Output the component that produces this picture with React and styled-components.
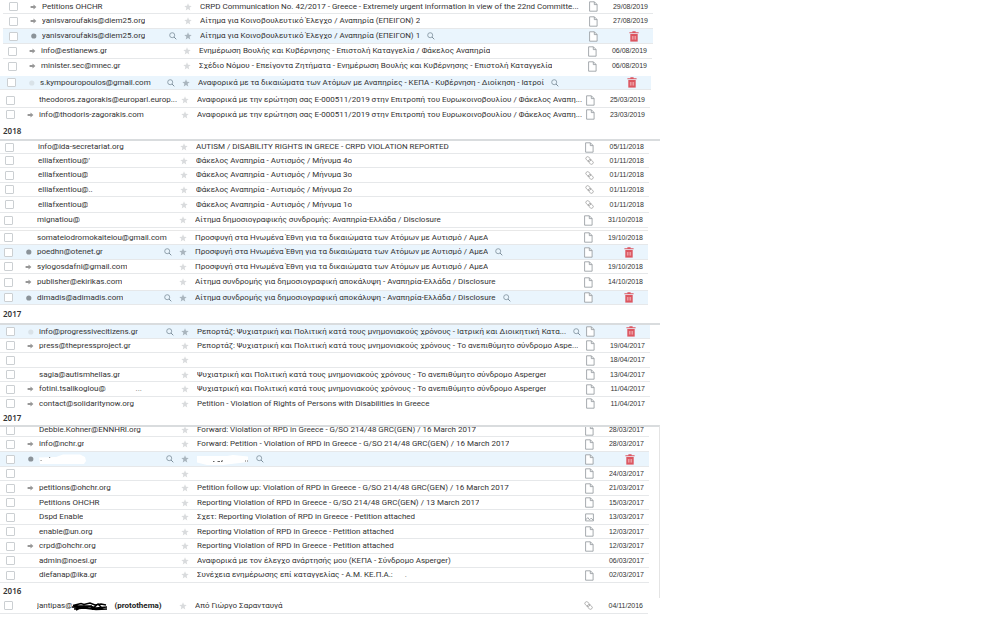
import React, { useState } from "react";
import { styled, createGlobalStyle, css } from "styled-components";

const PETITION = "G/SO 214/48 GRC(GEN)";

const batches = [
  {
    id: "a",
    shift: 0,
    inset: 3,
    rows: [
      { mark: "arrow", from: "Petitions OHCHR", subject: "CRPD Communication No. 42/2017 - Greece - Extremely urgent information in view of the 22nd Committe...", date: "29/08/2019", h: 14 },
      { mark: "arrow", from: "yanisvaroufakis@diem25.org", subject: "Αίτημα για Κοινοβουλευτικό Έλεγχο / Αναπηρία (ΕΠΕΙΓΟΝ) 2", date: "27/08/2019" },
      { mark: "dot", active: true, from: "yanisvaroufakis@diem25.org", subject: "Αίτημα για Κοινοβουλευτικό Έλεγχο / Αναπηρία (ΕΠΕΙΓΟΝ) 1" },
    ],
  },
  {
    id: "b",
    shift: -1,
    inset: 3,
    after: 2,
    open: true,
    rows: [
      { mark: "arrow", from: "info@estianews.gr", subject: "Ενημέρωση Βουλής και Κυβέρνησης - Επιστολή Καταγγελία / Φάκελος Αναπηρία", date: "06/08/2019" },
      { mark: "arrow", from: "minister.sec@mnec.gr", subject: "Σχέδιο Νόμου - Επείγοντα Ζητήματα - Ενημέρωση Βουλής και Κυβέρνησης - Επιστολή Καταγγελία", date: "06/08/2019" },
    ],
  },
  {
    id: "c",
    shift: -2,
    after: 3,
    rows: [
      { mark: "faint", active: true, noFile: true, from: "s.kympouropoulos@gmail.com", subject: "Αναφορικά με τα δικαιώματα των Ατόμων με Αναπηρίες - ΚΕΠΑ - Κυβέρνηση - Διοίκηση - Ιατροί", h: 14 },
    ],
  },
  {
    id: "d",
    shift: -3,
    open: true,
    rows: [
      { from: "theodoros.zagorakis@europarl.europ...", subject: "Αναφορικά με την ερώτηση σας E-000511/2019 στην Επιτροπή του Ευρωκοινοβουλίου / Φάκελος Αναπη...", date: "25/03/2019" },
      { mark: "arrow", from: "info@thodoris-zagorakis.com", subject: "Αναφορικά με την ερώτηση σας E-000511/2019 στην Επιτροπή του Ευρωκοινοβουλίου / Φάκελος Αναπη...", date: "23/03/2019", h: 14 },
    ],
  },
  {
    id: "e",
    year: "2018",
    yearHeight: 17,
    ruled: true,
    shift: -4,
    rows: [
      { from: "info@ida-secretariat.org", subject: "AUTISM / DISABILITY RIGHTS IN GRECE - CRPD VIOLATION REPORTED", date: "05/11/2018", h: 13 },
      { from: "elliafxentiou@'", subject: "Φάκελος Αναπηρία - Αυτισμός / Μήνυμα 4ο", date: "01/11/2018", file: "clip", h: 14 },
      { from: "elliafxentiou@", subject: "Φάκελος Αναπηρία - Αυτισμός / Μήνυμα 3ο", date: "01/11/2018", file: "clip" },
      { from: "elliafxentiou@..", subject: "Φάκελος Αναπηρία - Αυτισμός / Μήνυμα 2ο", date: "01/11/2018", file: "clip", h: 14 },
      { from: "elliafxentiou@", subject: "Φάκελος Αναπηρία - Αυτισμός / Μήνυμα 1ο", date: "01/11/2018", file: "clip", h: 16 },
    ],
  },
  {
    id: "f",
    shift: -5,
    after: 2,
    rows: [{ from: "mignatiou@", subject: "Αίτημα δημοσιογραφικής συνδρομής: Αναπηρία-Ελλάδα / Disclosure", date: "31/10/2018" }],
  },
  {
    id: "g",
    shift: -5,
    topLine: true,
    rows: [
      { from: "somateiodromokaiteiou@gmail.com", subject: "Προσφυγή στα Ηνωμένα Έθνη για τα δικαιώματα των Ατόμων με Αυτισμό / ΑμεΑ", date: "19/10/2018", h: 14 },
      { mark: "dot", active: true, from: "poedhn@otenet.gr", subject: "Προσφυγή στα Ηνωμένα Έθνη για τα δικαιώματα των Ατόμων με Αυτισμό / ΑμεΑ" },
      { mark: "arrow", from: "sylogosdafni@gmail.com", subject: "Προσφυγή στα Ηνωμένα Έθνη για τα δικαιώματα των Ατόμων με Αυτισμό / ΑμεΑ", date: "19/10/2018", h: 14 },
      { mark: "arrow", from: "publisher@ekirikas.com", subject: "Αίτημα συνδρομής για δημοσιογραφική αποκάλυψη - Αναπηρία-Ελλάδα / Disclosure", date: "14/10/2018", h: 17 },
      { mark: "dot", active: true, from: "dimadis@adimadis.com", subject: "Αίτημα συνδρομής για δημοσιογραφική αποκάλυψη - Αναπηρία-Ελλάδα / Disclosure", h: 14 },
    ],
  },
  {
    id: "h",
    year: "2017",
    yearHeight: 18,
    ruled: true,
    shift: -3,
    open: true,
    rows: [
      { mark: "faint", active: true, from: "info@progressivecitizens.gr", subject: "Ρεπορτάζ: Ψυχιατρική και Πολιτική κατά τους μνημονιακούς χρόνους - Ιατρική και Διοικητική Κατα...", h: 14 },
      { mark: "arrow", from: "press@thepressproject.gr", subject: "Ρεπορτάζ: Ψυχιατρική και Πολιτική κατά τους μνημονιακούς χρόνους - Το ανεπιθύμητο σύνδρομο Aspe...", date: "19/04/2017", h: 14 },
      { date: "18/04/2017" },
      { from: "sagia@autismhellas.gr", subject: "Ψυχιατρική και Πολιτική κατά τους μνημονιακούς χρόνους - Το ανεπιθύμητο σύνδρομο Asperger", date: "13/04/2017", h: 14 },
      { mark: "arrow", from: "fotini.tsalikoglou@", fromTail: "...", subject: "Ψυχιατρική και Πολιτική κατά τους μνημονιακούς χρόνους - Το ανεπιθύμητο σύνδρομο Asperger", date: "11/04/2017" },
      { mark: "arrow", from: "contact@solidaritynow.org", subject: "Petition - Violation of Rights of Persons with Disabilities in Greece", date: "11/04/2017", h: 14 },
    ],
  },
  {
    id: "i",
    year: "2017",
    yearHeight: 14,
    ruled: true,
    framed: true,
    shift: -3,
    rows: [
      { cut: true, from: "Debbie.Kohner@ENNHRI.org", subject: `Forward: Violation of RPD in Greece - ${PETITION} / 16 March 2017`, date: "28/03/2017", h: 10 },
      { mark: "arrow", from: "info@nchr.gr", subject: `Forward: Petition - Violation of RPD in Greece - ${PETITION} / 16 March 2017`, date: "28/03/2017" },
      { mark: "dot", active: true, erased: true },
      { date: "24/03/2017", h: 14 },
      { mark: "arrow", from: "petitions@ohchr.org", subject: `Petition follow up: Violation of RPD in Greece - ${PETITION} / 16 March 2017`, date: "21/03/2017" },
      { from: "Petitions OHCHR", subject: `Reporting Violation of RPD in Greece - ${PETITION} / 13 March 2017`, date: "15/03/2017", h: 14 },
      { from: "Dspd Enable", subject: "Σχετ: Reporting Violation of RPD in Greece - Petition attached", date: "13/03/2017", file: "image" },
      { from: "enable@un.org", subject: "Reporting Violation of RPD in Greece - Petition attached", date: "12/03/2017", h: 14 },
      { mark: "arrow", from: "crpd@ohchr.org", subject: "Reporting Violation of RPD in Greece - Petition attached", date: "12/03/2017" },
      { from: "admin@noesi.gr", subject: "Αναφορικά με τον έλεγχο ανάρτησής μου (ΚΕΠΑ - Σύνδρομο Asperger)", date: "06/03/2017", noFile: true, h: 14 },
      { from: "diefanap@ika.gr", subject: "Συνέχεια ενημέρωσης επί καταγγελίας - Α.Μ. ΚΕ.Π.Α.:", subjectTail: ".", date: "02/03/2017" },
    ],
  },
  {
    id: "j",
    year: "2016",
    yearHeight: 15,
    yearFramed: true,
    shift: -5,
    rows: [{ from: "jantipas@", note: "(protothema)", subject: "Από Γιώργο Σαρανταυγά", date: "04/11/2016", file: "clip", h: 16 }],
  },
];

const ArrowIcon = () => (
  <svg width="7" height="6" viewBox="0 0 7 6" aria-hidden="true">
    <path d="M.6 1.900h2.900V.6L6.400 3 3.500 5.400V4.100H.6z" fill="#979797" />
  </svg>
);

const DotIcon = ({ faint }) => (
  <svg width="7" height="6" viewBox="0 0 7 6" aria-hidden="true">
    <circle cx="3.8" cy="3" r="2.6" fill={faint ? "#d9e2e8" : "#8b9399"} />
  </svg>
);

const StarIcon = () => (
  <svg width="8" height="8" viewBox="0 0 8 8" aria-hidden="true">
    <path d="M4 .3l1 2.5 2.7.2-2.1 1.7.7 2.7L4 5.9 1.7 7.4l.7-2.7L.3 3 3 2.8z" fill="currentColor" />
  </svg>
);

const SearchIcon = () => (
  <svg width="8" height="8" viewBox="0 0 8 8" fill="none" stroke="#7d8f9c" aria-hidden="true">
    <circle cx="3.2" cy="3.2" r="2.5" strokeWidth="0.8" />
    <path d="M5 5l2.3 2.3" strokeWidth="1" />
  </svg>
);

const TrashIcon = () => (
  <svg width="10" height="11" viewBox="0 0 10 11" aria-hidden="true">
    <path d="M.4 1.2h3V.2h3.2v1h3v1.1H.4z" fill="#dc5660" />
    <path d="M1.3 3h7.4v7.6H1.3z" fill="#dc5660" />
    <path d="M3.4 5v3.6M5 5v3.6M6.6 5v3.6" stroke="#f7c4c8" strokeWidth="0.7" />
  </svg>
);

const FileIcon = () => (
  <svg width="9" height="11" viewBox="0 0 9 11" fill="#fff" stroke="#8f959b" strokeWidth="0.8" aria-hidden="true">
    <path d="M.6.8h4.8l2.7 2.7v6.7H.6z" />
    <path d="M5.3.9v2.7h2.7" fill="none" />
  </svg>
);

const ClipIcon = () => (
  <svg width="9" height="9" viewBox="0 0 9 9" fill="none" stroke="#a3a3a3" strokeWidth="0.8" aria-hidden="true">
    <rect x="0.6" y="1.4" width="5.4" height="3.4" rx="1.7" transform="rotate(42 3.300 3.100)" />
    <rect x="3.1" y="4.2" width="5.4" height="3.4" rx="1.7" transform="rotate(42 5.800 5.900)" />
  </svg>
);

const ImageIcon = () => (
  <svg width="9" height="9" viewBox="0 0 9 9" fill="none" stroke="#8f959b" strokeWidth="0.8" aria-hidden="true">
    <path d="M.6.9h7.8v7H.6z" />
    <path d="M.8 6.800l2-2.200 1.700 2.200 1.600-1.600 2.100 1.900" />
  </svg>
);

const ErasedName = () => (
  <svg width="48" height="12" viewBox="0 0 48 12" aria-hidden="true">
    <path d="M0 4.500L17 4l7-2.500h17l5 2.500 1 4-2 3H1z" fill="#fff" />
    <path d="M1.500 7.500h1.200M10 4.500h1.200" stroke="#777" strokeWidth="0.8" />
  </svg>
);

const ErasedSubject = () => (
  <svg width="52" height="12" viewBox="0 0 52 12" aria-hidden="true">
    <path d="M0 3h30l6-1 15 1.500V9L34 11l-8 1H10L0 9.500z" fill="#fff" />
    <path d="M16 8.500h1.500M20.500 8.500h2.500M24 8.500h1M25 7l.5 1.500M48 8h1M50 8h1" stroke="#555" strokeWidth="0.9" />
  </svg>
);

const Scribble = () => (
  <svg width="37" height="10" viewBox="0 0 37 10" fill="none" stroke="#000" aria-hidden="true">
    <path d="M1 4.500l8-2 3 1 6-1.500 5 2 6-1 5 1M0 6l11 .5 7-1.500 6 2 11-1M2 8l10-1 12 1.500 11-.5M4 9l8-4 8 3 6-5 5 5M2 5h18M8 7h22" strokeWidth="1.600" />
  </svg>
);

const fileIcons = { file: FileIcon, clip: ClipIcon, image: ImageIcon };

const MailRow = ({ row }) => {
  const [checked, setChecked] = useState(false);
  const label = row.from || "message";
  const File = fileIcons[row.file || "file"];

  return (
    <Row $h={row.h} $active={row.active} $cut={row.cut}>
      <Cell>
        <Check
          type="checkbox"
          aria-label={`Select ${label}`}
          checked={checked}
          onChange={() => setChecked(!checked)}
        />
      </Cell>
      <Cell>
        {row.mark === "arrow" && <ArrowIcon />}
        {row.mark === "dot" && <DotIcon />}
        {row.mark === "faint" && <DotIcon faint />}
      </Cell>
      <Sender>
        {row.erased ? <ErasedName /> : <Text>{row.from}</Text>}
        {row.fromTail && <Tail $gap={30}>{row.fromTail}</Tail>}
        {row.note && (
          <>
            <Scribble />
            <Note>{row.note}</Note>
          </>
        )}
        {row.active && (
          <IconButton type="button" $end aria-label={`Search mail from ${label}`}>
            <SearchIcon />
          </IconButton>
        )}
      </Sender>
      <Cell>
        <StarButton type="button" $on={row.active} aria-label="Star">
          <StarIcon />
        </StarButton>
      </Cell>
      <Subject>
        {row.erased && <ErasedSubject />}
        {row.subject && <SubjectLink href="#message">{row.subject}</SubjectLink>}
        {row.subjectTail && <Tail $gap={12}>{row.subjectTail}</Tail>}
        {row.active && (
          <IconButton type="button" aria-label="Search this subject">
            <SearchIcon />
          </IconButton>
        )}
      </Subject>
      <Cell>{!row.noFile && <File />}</Cell>
      <DateCell>
        {row.active ? (
          <TrashButton type="button" aria-label="Delete">
            <TrashIcon />
          </TrashButton>
        ) : (
          row.date
        )}
      </DateCell>
    </Row>
  );
};

const App = () => {
  return (
    <>
      <GlobalStyle />
      <MailList>
        {batches.map((batch) => (
          <section key={batch.id}>
            {batch.year && (
              <Year $h={batch.yearHeight} $framed={batch.yearFramed}>
                {batch.year}
              </Year>
            )}
            <Frame $ruled={batch.ruled} $framed={batch.framed} $after={batch.after}>
              <Table $shift={batch.shift} $inset={batch.inset} $topLine={batch.topLine} $open={batch.open}>
                <tbody>
                  {batch.rows.map((row, i) => (
                    <MailRow key={i} row={row} />
                  ))}
                </tbody>
              </Table>
            </Frame>
          </section>
        ))}
      </MailList>
    </>
  );
};

export default App;

const GlobalStyle = createGlobalStyle`
  * {
    box-sizing: border-box;
  }

  body {
    margin: 0;
    background: #fff;
    color: #333;
    font-family: Roboto, "Noto Sans", sans-serif;
    font-size: 8px;
    line-height: 12px;
  }

  svg {
    display: block;
    flex: none;
  }
`;

const MailList = styled.main`
  width: 66%;
  min-width: 480px;
`;

const Year = styled.h2`
  margin: 0;
  padding-left: 3px;
  height: ${({ $h }) => $h}px;
  display: flex;
  align-items: center;
  border-right: ${({ $framed }) => ($framed ? "1px solid #e4e4e4" : "none")};
  font-family: "Noto Sans", sans-serif;
  font-size: 8px;
  font-weight: 600;
`;

const Frame = styled.div`
  padding-bottom: ${({ $after }) => $after || 0}px;
  border-top: ${({ $ruled }) => ($ruled ? "2px solid #d9dcde" : "none")};
  border-right: ${({ $framed }) => ($framed ? "1px solid #e4e4e4" : "none")};
`;

/* shift moves the columns of one batch, the rows keep their full width */
const Table = styled.table`
  display: block;
  margin-left: ${({ $inset }) => $inset || 0}px;
  margin-right: ${({ $shift }) => 7 - $shift}px;
  border-top: ${({ $topLine }) => ($topLine ? "1px solid #e8e8e8" : "none")};

  tbody {
    display: block;
  }

  tr {
    padding-left: ${({ $shift, $inset }) => 9 + $shift - ($inset || 0)}px;
  }

  ${({ $open }) =>
    $open &&
    css`
      tr:last-child {
        border-bottom-color: transparent;
      }
    `}
`;

const Row = styled.tr`
  display: grid;
  grid-template-columns: 21px 12px 142px 16px minmax(0, 1fr) 23px 36px;
  align-content: ${({ $cut }) => ($cut ? "end" : "center")};
  height: ${({ $h }) => $h || 15}px;
  padding-right: 5px;
  overflow: hidden;
  border-bottom: 1px solid #e6e8ea;
  background: ${({ $active }) => ($active ? "#eaf5fd" : "transparent")};
`;

const Cell = styled.td`
  display: flex;
  align-items: center;
  min-width: 0;
  height: 12px;
  padding: 0;
  white-space: nowrap;
`;

const Sender = styled(Cell)`
  padding-right: 1px;
`;

const Subject = styled(Cell)`
  padding-right: 2px;
`;

const DateCell = styled(Cell)`
  justify-content: flex-end;
  font-family: "Liberation Sans", Arial, sans-serif;
  font-size: 7px;
`;

const Text = styled.span`
  overflow: hidden;
  text-overflow: ellipsis;
`;

const SubjectLink = styled.a`
  overflow: hidden;
  text-overflow: ellipsis;
  color: inherit;
  text-decoration: none;
`;

const Tail = styled.span`
  margin-left: ${({ $gap }) => $gap}px;
  color: #777;
`;

const Note = styled.strong`
  margin-left: 5px;
  color: #222;
`;

const Check = styled.input`
  appearance: none;
  width: 9px;
  height: 9px;
  margin: 0;
  border: 1px solid #cbcfd2;
  border-radius: 1px;
  background: #fff;

  &:checked {
    background: #8b9399;
  }
`;

const IconButton = styled.button`
  flex: none;
  margin: 0 ${({ $end }) => ($end ? "6px" : "0")} 0 ${({ $end }) => ($end ? "auto" : "7px")};
  padding: 0;
  border: 0;
  background: none;
  cursor: pointer;
`;

const StarButton = styled.button`
  padding: 0;
  border: 0;
  background: none;
  color: ${({ $on }) => ($on ? "#a9b5be" : "#d9dbdd")};
  cursor: pointer;
`;

const TrashButton = styled.button`
  margin-right: 9px;
  padding: 0;
  border: 0;
  background: none;
  cursor: pointer;
`;
